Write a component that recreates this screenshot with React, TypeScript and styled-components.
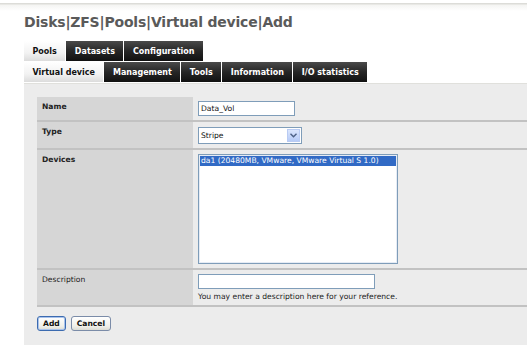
import styled, { createGlobalStyle } from 'styled-components';

const GlobalStyles = createGlobalStyle`
  html, body {
    margin: 0;
    padding: 0;
    background: #ffffff;
    font-family: "DejaVu Sans", Verdana, sans-serif;
  }
`;

const primaryTabs = ['Pools', 'Datasets', 'Configuration'];
const secondaryTabs = ['Virtual device', 'Management', 'Tools', 'Information', 'I/O statistics'];

function App() {
  return (
    <>
      <GlobalStyles />
      <Page>
        <TopShade />
        <Main>
          <Title>Disks|ZFS|Pools|Virtual device|Add</Title>
          <TabRow>
            {primaryTabs.map((t, i) => (
              <Tab key={t} active={i === 0}>{t}</Tab>
            ))}
          </TabRow>
          <TabRow>
            {secondaryTabs.map((t, i) => (
              <Tab key={t} active={i === 0}>{t}</Tab>
            ))}
          </TabRow>
          <Panel>
            <FormTable>
              <tbody>
                <Row>
                  <Label bold>Name</Label>
                  <Value>
                    <TextInput width={97}>Data_Vol</TextInput>
                  </Value>
                </Row>
                <Row>
                  <Label bold>Type</Label>
                  <Value>
                    <Select>
                      <span>Stripe</span>
                      <SelectArrow>
                        <svg width="7" height="5" viewBox="0 0 7 5">
                          <path d="M0.5 0.8 L3.5 3.8 L6.5 0.8" fill="none" stroke="#4d6185" strokeWidth="1.4" />
                        </svg>
                      </SelectArrow>
                    </Select>
                  </Value>
                </Row>
                <Row>
                  <Label bold>Devices</Label>
                  <Value>
                    <ListBox>
                      <Option selected>da1 (20480MB, VMware, VMware Virtual S 1.0)</Option>
                    </ListBox>
                  </Value>
                </Row>
                <Row>
                  <Label>Description</Label>
                  <Value>
                    <TextInput width={177} />
                    <Hint>You may enter a description here for your reference.</Hint>
                  </Value>
                </Row>
              </tbody>
            </FormTable>
            <Buttons>
              <Button primary>Add</Button>
              <Button>Cancel</Button>
            </Buttons>
          </Panel>
        </Main>
      </Page>
    </>
  );
}

export default App;

const Page = styled.div`
  width: 527px;
  height: 363px;
  overflow: hidden;
  background: #fff;
`;

const TopShade = styled.div`
  height: 11px;
  border-top: 3px solid #fff;
  box-sizing: border-box;
  background: linear-gradient(#dcdcd8 0px, #dcdcd8 1px, #f4f4f2 2px, #ffffff 100%);
`;

const Main = styled.div`
  padding-left: 24px;
`;

const Title = styled.h1`
  margin: 3px 0 0 0;
  height: 27px;
  font-family: "DejaVu Sans", Verdana, sans-serif;
  font-size: 14px;
  font-weight: bold;
  color: #5a5a5a;
  letter-spacing: -0.2px;
  line-height: 17px;
`;

const TabRow = styled.div`
  display: flex;
  height: 20px;
  margin-bottom: 1px;
`;

const Tab = styled.div<{ active?: boolean }>`
  display: flex;
  align-items: center;
  padding: 0 8.5px;
  margin-right: 1px;
  font-size: 8px;
  font-weight: bold;
  white-space: nowrap;
  color: ${p => (p.active ? '#111' : '#fff')};
  background: ${p =>
    p.active
      ? 'linear-gradient(#ffffff, #f2f2f2 60%, #dcdcdc)'
      : 'linear-gradient(#4a4a4a, #262626 50%, #111111)'};
`;

const Panel = styled.div`
  background: #ececec;
  border-top: 1px solid #e0e0dc;
  margin-right: -20px;
  padding: 13px 0 14px 13px;
`;

const FormTable = styled.table`
  width: 100%;
  border-collapse: collapse;
  font-size: 7.6px;
`;

const Row = styled.tr`
  border-bottom: 2px solid #c2c2c2;
`;

const Label = styled.td<{ bold?: boolean }>`
  width: 146px;
  padding: 5px 5px 0 5px;
  vertical-align: top;
  background: #d6d6d6;
  color: #222;
  font-weight: ${p => (p.bold ? 'bold' : 'normal')};
`;

const Value = styled.td`
  padding: 4px 5px 4px 5px;
  vertical-align: top;
  background: #ececec;
`;

const TextInput = styled.div<{ width: number }>`
  width: ${p => p.width}px;
  height: 15px;
  box-sizing: border-box;
  border: 1px solid #7f9db9;
  background: #fff;
  padding: 2px 2px 0 2px;
  color: #111;
  line-height: 10px;
`;

const Select = styled.div`
  display: flex;
  align-items: center;
  justify-content: space-between;
  width: 104px;
  height: 17px;
  box-sizing: border-box;
  border: 1px solid #7f9db9;
  background: #fff;
  padding-left: 2px;
  color: #111;
  margin-top: 1px;
`;

const SelectArrow = styled.div`
  display: flex;
  align-items: center;
  justify-content: center;
  width: 13px;
  height: 13px;
  margin-right: 1px;
  border: 1px solid #b9cbf3;
  box-sizing: border-box;
  background: linear-gradient(#dbe6fd, #b6cbf7);
`;

const ListBox = styled.div`
  width: 200px;
  height: 110px;
  box-sizing: border-box;
  border: 1px solid #7f9db9;
  box-shadow: inset 0 0 0 1px #e6ecf5;
  background: #fff;
  padding: 1px;
`;

const Option = styled.div<{ selected?: boolean }>`
  height: 10px;
  line-height: 10px;
  padding-left: 1px;
  color: ${p => (p.selected ? '#fff' : '#111')};
  background: ${p => (p.selected ? '#316ac5' : 'transparent')};
`;

const Hint = styled.div`
  margin-top: 3px;
  color: #222;
`;

const Buttons = styled.div`
  display: flex;
  gap: 5px;
  margin-top: 9px;
`;

const Button = styled.div<{ primary?: boolean }>`
  height: 15px;
  box-sizing: border-box;
  display: flex;
  align-items: center;
  padding: 0 5px;
  font-size: 7.6px;
  font-weight: bold;
  color: #111;
  border: 1px solid ${p => (p.primary ? '#3c6bb0' : '#7b8ca8')};
  border-radius: 3px;
  background: linear-gradient(#ffffff, #f0f0ea 70%, #dcdcd4);
  box-shadow: ${p => (p.primary ? 'inset 0 0 0 1px #a9c3ec' : 'none')};
`;
